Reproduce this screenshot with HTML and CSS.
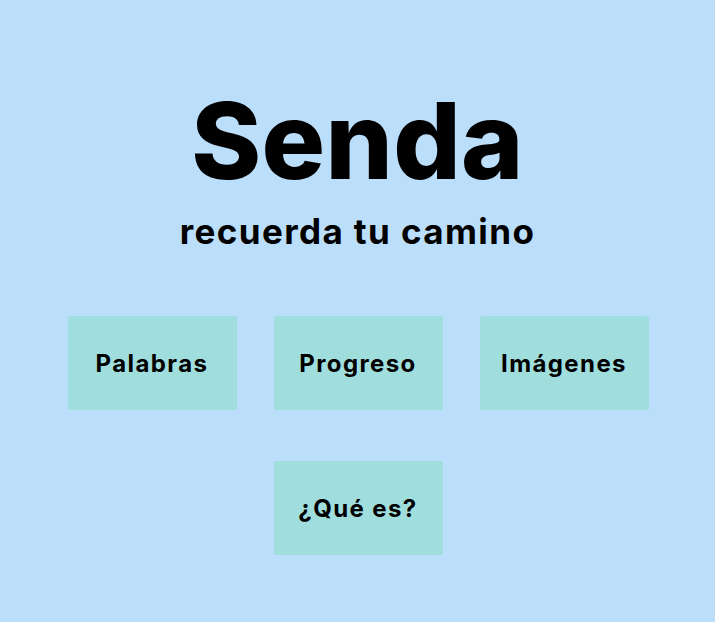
FILE: index.html
```html
<!DOCTYPE html>
<html lang="es">
<head>
<meta charset="utf-8">
<title>Senda</title>
<link rel="stylesheet" href="styles.css">
</head>
<body>
<main class="page">
  <header class="hero">
    <h1 class="title">Senda</h1>
    <p class="subtitle">recuerda tu camino</p>
  </header>
  <nav class="menu">
    <a class="tile" href="#">Palabras</a>
    <a class="tile" href="#">Progreso</a>
    <a class="tile" href="#">Imágenes</a>
    <a class="tile" href="#">¿Qué es?</a>
  </nav>
</main>
</body>
</html>
```
FILE: styles.css
```css
html, body {
  margin: 0;
  padding: 0;
  background: #bbdefb;
}
body {
  font-family: "Inter", "Noto Sans", sans-serif;
  color: #000;
  width: 715px;
  height: 622px;
  overflow: hidden;
}
.page {
  display: flex;
  flex-direction: column;
  align-items: center;
  padding-top: 88px;
}
.hero {
  display: flex;
  flex-direction: column;
  align-items: center;
}
.title {
  margin: 0;
  font-size: 106px;
  font-weight: 800;
  line-height: 106px;
  letter-spacing: 0.3px;
}
.subtitle {
  margin: 15px 0 0;
  font-size: 35px;
  font-weight: 700;
  line-height: 44px;
  letter-spacing: 1.4px;
}
.menu {
  margin-top: 63px;
  padding-left: 1px;
  display: grid;
  grid-template-columns: repeat(3, 169px);
  column-gap: 37px;
  row-gap: 51px;
  justify-content: center;
}
.tile {
  height: 94px;
  display: flex;
  align-items: center;
  justify-content: center;
  background: #a0dedd;
  border-radius: 2px;
  color: #000;
  text-decoration: none;
  font-size: 24px;
  font-weight: 700;
  letter-spacing: 1.4px;
}
.tile:nth-child(4) {
  grid-column: 2;
}
```
